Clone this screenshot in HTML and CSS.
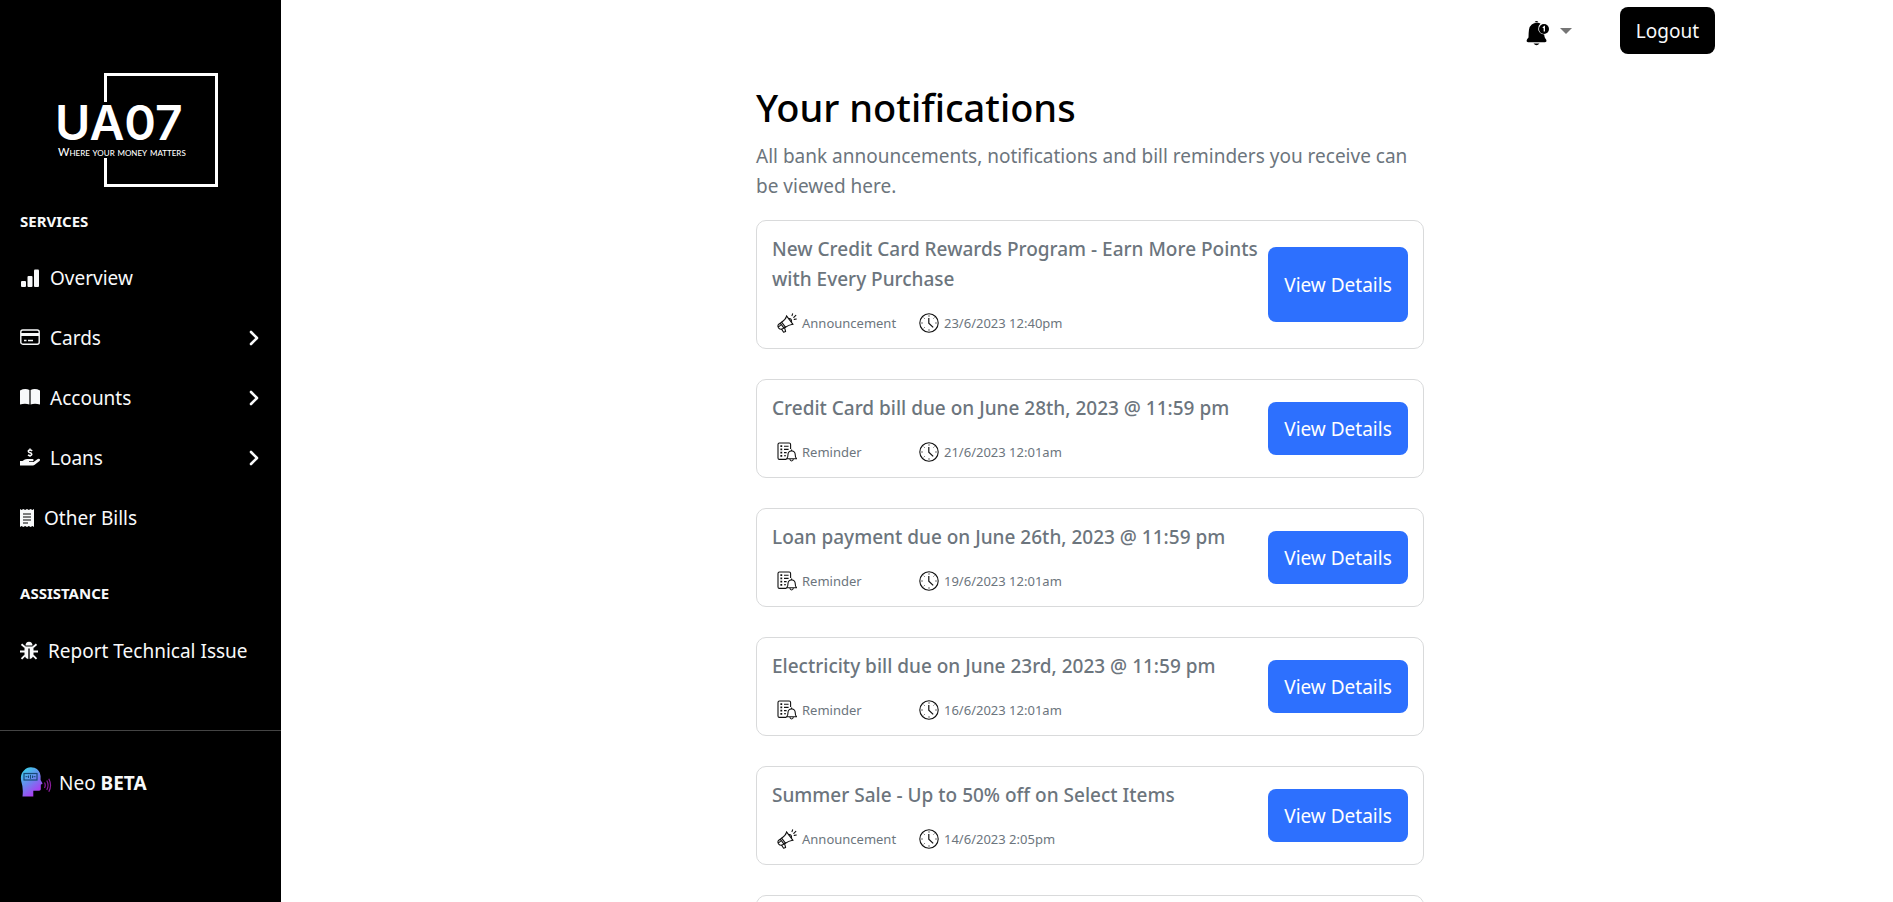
FILE: index.html
```html
<!DOCTYPE html>
<html lang="en">
<head>
<meta charset="utf-8">
<title>Your notifications</title>
<link rel="stylesheet" href="styles.css">
</head>
<body>
<svg class="sprite" aria-hidden="true">
  <symbol id="chevron" viewBox="0 0 10 16"><path d="M2 2l6 6-6 6" fill="none" stroke="currentColor" stroke-width="2.6" stroke-linecap="round" stroke-linejoin="round"/></symbol>
  <symbol id="horn" viewBox="0 0 20 20"><g fill="none" stroke="#111" stroke-width="1.1" stroke-linejoin="round" stroke-linecap="round"><path d="M9.500 2.800L16 11.400"/><path d="M9.600 3.200Q8.500 7 4.600 9.200l3.800 5Q11.600 12 15.600 11.200"/><path d="M4.600 9.200L1.800 11.200Q.2 12.800 1.500 14.800 3.200 16.800 5.200 16L8.400 14.200M3.400 10.400l3.600 4.800M1.800 13.600l1.600-1.200"/><path d="M4.600 16.200l2 3 2-.8-1-3.600"/><path d="M12 5.600q2.400-.4 2.600 2.800M15 2.600l.6-1.800M16.800 4.400l2-2M17.200 6.400l2.200-.4"/></g></symbol>
  <symbol id="bill" viewBox="0 0 20 20"><g fill="none" stroke="#111" stroke-width="1.1" stroke-linejoin="round"><path d="M9.5 17.4H2.4Q1 17.4 1 16V2.4Q1 1 2.4 1h9.8q1.4 0 1.4 1.4V7"/><path d="M7 4.200h4.600M7 7.400h4.600M7 10.600h2.600M7 13.800h2"/><path d="M3.400 4.200h1.800M3.400 7.400h1.800M3.400 10.600h1.800M3.400 13.800h1.800" stroke-width="1.8"/><path d="M9.600 16.800q1.400-1 1.400-4.200 0-3.200 3.600-3.800 3.600.6 3.600 3.800 0 3.200 1.400 4.200zM14.600 8.800V7.400M12.800 17q.4 2 1.800 2t1.800-2"/></g></symbol>
  <symbol id="clock" viewBox="0 0 20 20"><circle cx="10" cy="10" r="9.2" fill="none" stroke="#111" stroke-width="1.1"/><path d="M9.800 5v5.200l4.400 4.200" fill="none" stroke="#111" stroke-width="1.2"/><path d="M10 2.400v1.200M10 16.400v1.200M2.400 10h1.200M16.400 10h1.200M4.800 4.800l.7.7M14.600 5.400l.7-.7M4.800 15.200l.7-.7" stroke="#111"/></symbol>
</svg>
<div class="layout">
  <aside class="sidebar">
    <svg class="logo" viewBox="0 0 281 209" role="img" aria-label="UA07 Where your money matters">
      <path d="M105.500 102V74.500H216.500V185.500H105.500V158" fill="none" stroke="#fff" stroke-width="3"/>
      <text class="logo-name" x="55" y="140">UA07</text>
      <text class="logo-tag" x="58" y="156">Where your money matters</text>
    </svg>
    <h2 class="label">SERVICES</h2>
    <nav class="nav">
      <a class="item" href="#"><svg width="20" height="20" viewBox="0 0 20 20" fill="currentColor"><rect x="1" y="13" width="5" height="6" rx="1"/><rect x="7.500" y="8" width="5" height="11" rx="1"/><rect x="14" y="1.500" width="5" height="17.500" rx="1"/></svg>Overview</a>
      <a class="item" href="#"><svg width="20" height="20" viewBox="0 0 20 20"><rect x=".8" y="2" width="18.400" height="14.200" rx="2" fill="none" stroke="currentColor" stroke-width="1.400"/><path d="M1 5h18v3H1z" fill="currentColor"/><path d="M4 12.500h2.500M8 12.500h5" stroke="currentColor" stroke-width="1.400"/></svg>Cards<svg class="chev" width="10" height="16"><use href="#chevron"/></svg></a>
      <a class="item" href="#"><svg width="20" height="20" viewBox="0 0 20 20" fill="currentColor"><path d="M0 2.500Q5 0 9.400 2v14.500Q5 14.800 0 16.600zM20 2.500Q15 0 10.600 2v14.500Q15 14.800 20 16.600z"/></svg>Accounts<svg class="chev" width="10" height="16"><use href="#chevron"/></svg></a>
      <a class="item" href="#"><svg width="20" height="20" viewBox="0 0 20 20" fill="currentColor"><path d="M0 13h2.500q2.500-2.200 5-2h5q1.400.2 1 1.400-.4.900-1.600.9H9v.7h4.500l4.200-3q1.500-.7 2.200.3.400 1-.7 1.900l-4.500 3.600q-.8.600-1.800.6H0z"/><path d="M12.200 2.800Q10.600 1.600 9 2.200q-1.300.9-.2 2l2.400 1q1.300 1.300-.2 2.200-1.600.5-3-.6M10 .4v1.800M10 7.600v1.200" fill="none" stroke="currentColor" stroke-width="1.500"/></svg>Loans<svg class="chev" width="10" height="16"><use href="#chevron"/></svg></a>
      <a class="item" href="#"><svg width="14" height="20" viewBox="0 0 14 20"><path d="M0 1l1.500 1L3.300 1l1.800 1L7 1l1.800 1 1.800-1 1.800 1L14 1v18l-1.600-1-1.800 1-1.800-1L7 19l-1.900-1-1.800 1-1.800-1L0 19z" fill="currentColor"/><path d="M3 6h8M3 9h8M3 12h8M3 15h5" stroke="#000"/></svg>Other Bills</a>
    </nav>
    <h2 class="label second">ASSISTANCE</h2>
    <nav class="nav">
      <a class="item" href="#"><svg width="18" height="20" viewBox="0 0 18 20"><path d="M5.500 4.500Q5.600.7 9 .7t3.500 3.800z" fill="currentColor"/><path d="M4.500 5.500h9v8q-.8 4.600-4.500 4.600t-4.500-4.600z" fill="currentColor"/><path d="M1.500 3.300l3.500 3M16.500 3.300l-3.500 3M0 10.500h18M1.500 17.900l3.500-3.600M16.500 17.900L13 14.300" stroke="currentColor" stroke-width="1.900"/><path d="M9 7.500v10.600" stroke="#000" stroke-width="1.400"/></svg><span>Report Technical Issue</span></a>
    </nav>
    <div class="foot">
      <a class="item neo" href="#"><svg width="32" height="32" viewBox="0 0 32 32"><defs><linearGradient id="g" x1=".1" y1="0" x2=".7" y2="1"><stop offset="0" stop-color="#35d8e8"/><stop offset=".5" stop-color="#6a86ee"/><stop offset="1" stop-color="#b92df2"/></linearGradient></defs><path d="M2.500 29.500Q3.500 21 1.400 15-.4 7.500 4 3.500 8-1.200 14.500.8 20 3 20.600 9v4l2 3.600-1.800 1.200v4.700q-.5 1.200-2 1.200h-5.500v5.800z" fill="url(#g)"/><rect x="4" y="6.500" width="13" height="6.500" fill="none" stroke="#174a78" stroke-width="1.200"/><path d="M5.500 9.700h2M8.500 8.500v2.500M10.500 7.800v4M12.500 8.500v2.500M13.500 9.700h2" stroke="#174a78"/><path d="M24.500 15.500q1.500 2.800 0 5.500M26.800 13.500q2.500 4.800 0 9.500M28.800 11.800q3.500 6.500 0 13" fill="none" stroke="#8a1d9c" stroke-width="1.200"/></svg><span>Neo <b>BETA</b></span></a>
    </div>
  </aside>
  <main class="main">
    <header class="topbar">
      <button class="bell" aria-label="Notifications">
        <svg width="24" height="26" viewBox="0 0 24 26"><path d="M8.500 2.300Q10.500-.4 12.500 2.300zM7.500 23.500h6q-3 3.500-6 0zM.8 21.500Q0 20 2.500 17.500 2.500 13 3 9.500 4.500 2.800 11 2.800q2 0 3.500.8-2.900 2.800-2 7 1.200 3.600 5.700 4 .1 2 .8 3.400 2 2 1.300 3.500-.5.800-1.500.8H2.300q-1.100 0-1.500-.8z"/><circle cx="18" cy="9" r="5"/><path d="M16.800 7.800l1.500-1v4.700" fill="none" stroke="#fff" stroke-width="1.300"/></svg>
        <svg width="12" height="10" viewBox="0 0 12 10"><path d="M0 0h12L6 6z" fill="#757575"/></svg>
      </button>
      <button class="logout">Logout</button>
    </header>
    <section class="content">
      <h1>Your notifications</h1>
      <p class="intro">All bank announcements, notifications and bill reminders you receive can be viewed here.</p>
      <div class="list">
        <article class="card tall">
          <div class="info"><h3>New Credit Card Rewards Program - Earn More Points with Every Purchase</h3>
          <div class="meta"><span class="kind"><svg width="20" height="20"><use href="#horn"/></svg>Announcement</span><span class="time"><svg width="20" height="20"><use href="#clock"/></svg>23/6/2023 12:40pm</span></div></div>
          <button class="view">View Details</button>
        </article>
        <article class="card">
          <div class="info"><h3>Credit Card bill due on June 28th, 2023 @ 11:59 pm</h3>
          <div class="meta"><span class="kind"><svg width="20" height="20"><use href="#bill"/></svg>Reminder</span><span class="time"><svg width="20" height="20"><use href="#clock"/></svg>21/6/2023 12:01am</span></div></div>
          <button class="view">View Details</button>
        </article>
        <article class="card">
          <div class="info"><h3>Loan payment due on June 26th, 2023 @ 11:59 pm</h3>
          <div class="meta"><span class="kind"><svg width="20" height="20"><use href="#bill"/></svg>Reminder</span><span class="time"><svg width="20" height="20"><use href="#clock"/></svg>19/6/2023 12:01am</span></div></div>
          <button class="view">View Details</button>
        </article>
        <article class="card">
          <div class="info"><h3>Electricity bill due on June 23rd, 2023 @ 11:59 pm</h3>
          <div class="meta"><span class="kind"><svg width="20" height="20"><use href="#bill"/></svg>Reminder</span><span class="time"><svg width="20" height="20"><use href="#clock"/></svg>16/6/2023 12:01am</span></div></div>
          <button class="view">View Details</button>
        </article>
        <article class="card">
          <div class="info"><h3>Summer Sale - Up to 50% off on Select Items</h3>
          <div class="meta"><span class="kind"><svg width="20" height="20"><use href="#horn"/></svg>Announcement</span><span class="time"><svg width="20" height="20"><use href="#clock"/></svg>14/6/2023 2:05pm</span></div></div>
          <button class="view">View Details</button>
        </article>
        <article class="card"></article>
      </div>
    </section>
  </main>
</div>
</body>
</html>
```
FILE: styles.css
```css
* { box-sizing: border-box; }
body {
  margin: 0;
  font-family: "Noto Sans", "Open Sans", sans-serif;
  font-size: 19px;
  line-height: 30px;
  color: #6c757d;
  background: #fff;
}
h1, h2, h3, p { margin: 0; }
button { font: inherit; border: 0; cursor: pointer; }
.sprite { display: none; }
.layout { display: flex; height: 100vh; overflow: hidden; }

.sidebar { flex: 0 0 281px; background: #000; color: #f8f9fa; }
.logo { display: block; width: 100%; }
.logo-name { font: 600 48px Inter, sans-serif; fill: #fff; }
.logo-tag { font: 500 11px Lato, sans-serif; font-variant: small-caps; fill: #fff; }
.label { padding: 0 20px; margin-bottom: 15px; font-size: 15px; line-height: 24px; font-weight: 700; }
.label.second { margin-top: 33px; margin-bottom: 16px; }
.item {
  display: flex;
  align-items: center;
  gap: 10px;
  height: 60px;
  padding: 0 22px 0 20px;
  color: inherit;
  text-decoration: none;
}
.chev { margin-left: auto; }
.foot { margin-top: 49px; padding-top: 22px; border-top: 1px solid #444; }
.neo { gap: 7px; }

.main { flex: 1; min-width: 0; padding-left: 6px; }
.topbar { display: flex; justify-content: flex-end; align-items: center; gap: 48px; padding: 7px 178px 0 0; }
.bell { display: flex; align-items: center; gap: 10px; padding: 4px 0 0; background: none; }
.logout { height: 47px; padding: 0 16px; border-radius: 8px; background: #000; color: #f8f9fa; }

.content { width: 668px; max-width: 100%; margin: 0 auto; padding-top: 29px; }
h1 { font-size: 38px; line-height: 48px; font-weight: 500; color: #000; }
.intro { margin-top: 10px; }
.list { display: flex; flex-direction: column; gap: 30px; margin-top: 19px; }
.card {
  display: flex;
  align-items: center;
  justify-content: space-between;
  min-height: 99px;
  padding: 13px 15px;
  border: 1px solid #d9dadb;
  border-radius: 10px;
}
.info { flex: 1; min-width: 0; }
h3 { font-size: 19px; line-height: 30px; font-weight: 500; }
.meta { display: flex; align-items: center; margin-top: 17px; padding-left: 5px; font-size: 13px; line-height: 24px; }
.meta svg { flex: none; }
.kind, .time { display: flex; align-items: center; gap: 5px; }
.kind { width: 142px; }
.view { flex: 0 0 140px; height: 53px; padding: 0; border-radius: 8px; background: #2d70fe; color: #fff; }
.tall .view { height: 75px; }
```
